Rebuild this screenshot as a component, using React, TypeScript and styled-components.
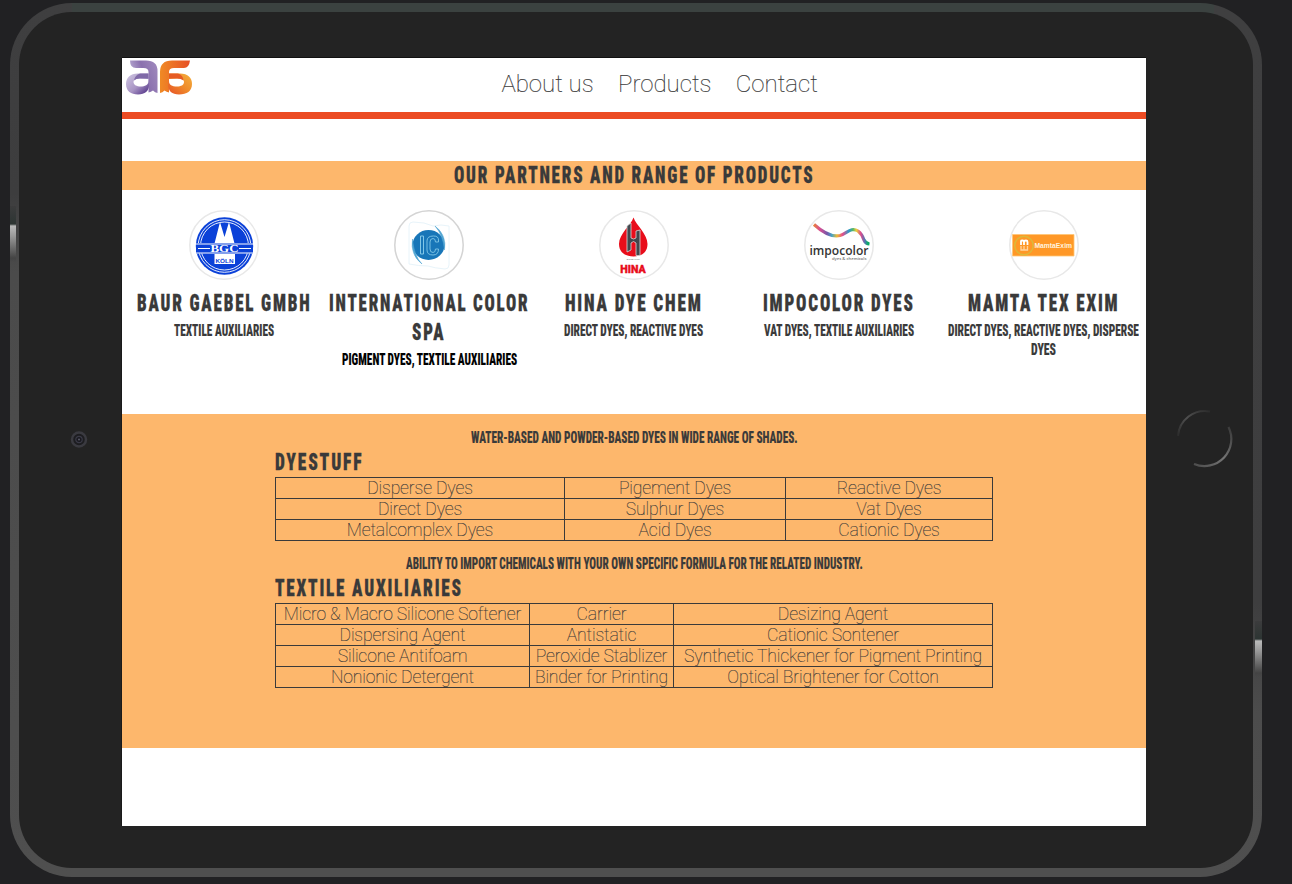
import React, { useLayoutEffect, useRef, useState } from 'react';
import styled, { createGlobalStyle } from 'styled-components';

const ink = '#3a3a3a';
const apricot = '#fdb76c';

const GlobalStyle = createGlobalStyle`
  * { box-sizing: border-box; }
  body { margin: 0; background: #212123; font-family: Roboto, sans-serif; color: ${ink}; overflow: hidden; }
  h1, h2, h3, p { margin: 0; font-weight: inherit; font-size: inherit; }
`;

const Desk = styled.div`
  width: 1292px;
  height: 884px;
  padding: 3px 0 0 10px;
  background: #212123;
`;

const Tablet = styled.div`
  position: relative;
  width: 1252px;
  height: 874px;
  padding: 55px 116px 51px 112px;
  border-radius: 62px;
  background:
    linear-gradient(#3f3f40 0, #3d3d3e 190px, #4b4b4b 270px, #4f4f4f 100%) 0 0 / 62px 100% no-repeat,
    linear-gradient(#3f3f40 0, #3e3e3f 600px, #4c4c4c 710px, #4f4f4f 100%) 100% 0 / 48px 100% no-repeat,
    linear-gradient(#3b4240 0, #3b4240 50%, #4f4f4f 50%, #4f4f4f 100%);
  &::before {
    content: '';
    position: absolute;
    inset: 9px;
    border-radius: 53px;
    background: #232323;
  }
`;

const Glint = styled.i<{ $side: 'left' | 'right'; $top: number }>`
  position: absolute;
  ${(p) => p.$side}: 0;
  top: ${(p) => p.$top}px;
  width: ${(p) => (p.$side === 'left' ? 6 : 7)}px;
  height: 56px;
  background: linear-gradient(#3c3c3d 0, #2d3533 18px, #bababa 20px, #999 30px, #444 52px, transparent);
`;

const Camera = styled.svg`
  position: absolute;
  left: 60px;
  top: 427px;
`;

const HomeButton = styled.svg`
  position: absolute;
  left: 1164px;
  top: 404px;
`;

const Screen = styled.main`
  position: relative;
  width: 1024px;
  height: 768px;
  background: #fff;
  box-shadow: 0 -1px 0 #111, -1px 0 0 #1a1a1a;
`;

const Header = styled.header`
  display: flex;
  height: 61px;
  border-bottom: 7px solid #ec4b23;
  padding: 0 0 0 2px;
`;

const Nav = styled.nav`
  display: flex;
  gap: 24.4px;
  padding: 11px 0 0 307.4px;
  font-size: 24px;
  line-height: 30px;
  font-weight: 100;
  -webkit-text-stroke: 0.2px ${ink};
`;

const NavItem = styled.a`
  white-space: nowrap;
`;

const TitleBand = styled.h1`
  display: flex;
  justify-content: center;
  height: 29px;
  margin-top: 42px;
  background: ${apricot};
`;

const Partners = styled.section`
  display: grid;
  grid-template-columns: repeat(5, 1fr);
  height: 224px;
  padding-top: 20px;
`;

const Partner = styled.article`
  display: flex;
  flex-direction: column;
  align-items: center;
  svg { display: block; margin-bottom: 9px; }
`;

const Lines = styled.div<{ $dark?: boolean }>`
  display: flex;
  flex-direction: column;
  align-items: center;
  color: ${(p) => (p.$dark ? '#000' : ink)};
  & + & { margin-top: 3px; }
`;

const FitBox = styled.span<{ $width: number; $large?: boolean }>`
  display: block;
  width: ${(p) => p.$width}px;
  height: ${(p) => (p.$large ? 29 : 19)}px;
  line-height: ${(p) => (p.$large ? 28 : 19)}px;
  font-size: ${(p) => (p.$large ? 24.8 : 16.5)}px;
  letter-spacing: ${(p) => (p.$large ? 2.6 : 0)}px;
  font-weight: ${(p) => (p.$large ? 900 : 800)};
  font-stretch: 75%;
  -webkit-text-stroke: ${(p) => (p.$large ? 0.3 : 0.15)}px currentColor;
  white-space: nowrap;
`;

const FitGlyphs = styled.span`
  display: inline-block;
  transform-origin: 0 50%;
`;

function Condensed({ text, width, large }: { text: string; width: number; large?: boolean }) {
  const ref = useRef<HTMLSpanElement>(null);
  const [scale, setScale] = useState(0.6);
  useLayoutEffect(() => {
    const el = ref.current;
    if (el) setScale((width - (large ? 2.2 : 0)) / (el.offsetWidth - (large ? 2.6 : 0)));
  }, [text, width, large]);
  return (
    <FitBox $width={width} $large={large}>
      <FitGlyphs ref={ref} style={{ transform: `scaleX(${scale})` }}>{text}</FitGlyphs>
    </FitBox>
  );
}

const Range = styled.section`
  display: flex;
  flex-direction: column;
  align-items: center;
  height: 334px;
  padding-top: 14px;
  background: ${apricot};
`;

const Group = styled.div`
  display: flex;
  flex-direction: column;
  align-items: center;
  width: 718px;
  height: 126px;
`;

const GroupTitle = styled.h2`
  align-self: flex-start;
  height: 30px;
  padding: 1px 0 0;
`;

const Table = styled.table`
  align-self: flex-start;
  width: 717px;
  table-layout: fixed;
  border-collapse: collapse;
  font-size: 17.6px;
  letter-spacing: -0.15px;
  font-weight: 100;
  -webkit-text-stroke: 0.15px ${ink};
  line-height: 20px;
  text-align: center;
`;

const Cell = styled.td`
  height: 21px;
  padding: 0;
  border: 1px solid ${ink};
  white-space: nowrap;
`;

function ProductTable({ columns, rows }: { columns: number[]; rows: string[][] }) {
  return (
    <Table>
      <colgroup>{columns.map((w, i) => <col key={i} width={w} />)}</colgroup>
      <tbody>
        {rows.map((row) => (
          <tr key={row[0]}>{row.map((c) => <Cell key={c}>{c}</Cell>)}</tr>
        ))}
      </tbody>
    </Table>
  );
}

const BrandLogo = () => (
  <svg width="70" height="40" viewBox="124 58 70 40">
    <defs>
      <linearGradient id="lilac" x1="0" y1="0.7" x2="1" y2="0.3"><stop offset="0" stopColor="#c5bbdc" /><stop offset=".55" stopColor="#8a70ae" /><stop offset="1" stopColor="#9d86bb" /></linearGradient>
      <linearGradient id="plum" x1="0" y1="0" x2="1" y2="1"><stop offset="0" stopColor="#d0c8e3" /><stop offset=".55" stopColor="#a894c4" /><stop offset="1" stopColor="#45247e" /></linearGradient>
      <linearGradient id="flame" x1="0" y1="0" x2="1" y2="0"><stop offset="0" stopColor="#f08a25" /><stop offset="1" stopColor="#e64f26" /></linearGradient>
      <linearGradient id="amber" x1="0" y1="1" x2="1" y2="0"><stop offset="0" stopColor="#e64f26" /><stop offset=".5" stopColor="#ef8a2b" /><stop offset="1" stopColor="#f4b13e" /></linearGradient>
    </defs>
    <path fill="url(#lilac)" d="M130 60.500H146Q157.500 60.500 157.500 71V93Q155 92.500 153 90.500Q151 92 148.500 92.500V72Q148.500 68 143.500 68H136Q130 68 130 60.500Z" />
    <path fill="url(#plum)" fillRule="evenodd" d="M148.500 73.500H138C130 73.500 126 78 126 84C126 91 131 94.500 138 94.500C145 94.500 149 91 149 85ZM148.500 79V81C148.500 85 145 86.500 140.500 86.500C137 86.500 133.500 85 133.500 82C133.500 79 137 78.500 140 78.500Z" />
    <path fill="#806aa8" d="M148.500 73.500H140Q135 75 134 80.500Q136 78.500 140 78.500H148.500Z" />
    <path fill="url(#flame)" d="M190 60.500H172Q160 60.500 160 72V93Q162.500 92.500 164.500 90.500Q166.500 92 169 92.500V72Q169 68 174 68H184Q189 68 190 60.500Z" />
    <path fill="url(#amber)" fillRule="evenodd" d="M169 73.500H180C188 73.500 192 78 192 84C192 91 187 94.500 179 94.500C172 94.500 168 91 168 84ZM169 79V81C169 85 172 86.500 177 86.500C181 86.500 184 85 184 82C184 79 181 78.500 177 78.500Z" />
    <path fill="#e65b24" d="M169 73.500H178Q183 75 183.500 80.500Q181 78.500 177 78.500H169Z" />
  </svg>
);

const Medallion = ({ ring = '#e8e8e8', children }: { ring?: string; children: React.ReactNode }) => (
  <svg width="70" height="70" viewBox="0 0 70 70">
    <circle cx="35" cy="35" r="34.200" fill="#fff" stroke={ring} strokeWidth="1.500" />
    {children}
  </svg>
);

const BgcLogo = () => (
  <Medallion>
    <circle cx="35.500" cy="36" r="28.700" fill="#0b41d8" />
    <circle cx="35.500" cy="36" r="26.300" fill="none" stroke="#fff" strokeWidth=".9" />
    <circle cx="35.500" cy="36" r="24" fill="none" stroke="#fff" strokeWidth=".9" />
    <path d="M25.500 33.500L31 12L35.500 27L40 12L45.500 33.500ZM25.500 44H46V54H25.500Z" fill="#fff" />
    <path d="M7 33H64V43.500H7Z" fill="#0b41d8" />
    <path d="M7 34H64M7 43H64M9 38.500H21M50 38.500H62" stroke="#fff" strokeWidth="1" />
    <text x="35.500" y="42.200" textAnchor="middle" textLength="28" lengthAdjust="spacingAndGlyphs" fontFamily="Liberation Serif, serif" fontWeight="700" fontSize="10.500" fill="#fff">BGC</text>
    <text x="35.500" y="53" textAnchor="middle" textLength="18" lengthAdjust="spacingAndGlyphs" fontFamily="Liberation Sans, sans-serif" fontWeight="700" fontSize="4.500" fill="#0b41d8">KÖLN</text>
  </Medallion>
);

const IcLogo = () => (
  <Medallion ring="#d4d4d4">
    <path d="M15 54V16Q15 12 19 12Q31 12 39 16Q47 14 55 16V55Q55 59 51 59Q40 58 34 56Q25 56 15 54Z" fill="none" stroke="#e8f4fa" strokeWidth="1" />
    <ellipse cx="34.500" cy="35" rx="16" ry="15" fill="#1876b8" />
    <path d="M41 16Q53 25 50.500 40Q49 25 41 16ZM28 54Q16 45 18.500 29Q20 46 28 54Z" fill="#50a5d2" stroke="#50a5d2" strokeWidth=".5" />
    <path d="M26.500 26H29.500V44H26.500Z" fill="none" stroke="#82c7e7" strokeWidth="1" />
    <path d="M44.500 32V30Q44.500 26 39.500 26Q33 26 33 31V40Q33 45 39 45Q44.500 45 44.500 39H41.500Q41.500 42.500 39 42.500Q36 42.500 36 39V32Q36 28.500 39 28.500Q41.500 28.500 41.500 32Z" fill="none" stroke="#82c7e7" strokeWidth=".9" />
  </Medallion>
);

const HinaLogo = () => (
  <Medallion>
    <path d="M34.500 7.500C32 15 20 24 20 34C20 42 26 46.500 34.500 46.500C43 46.500 48.500 42 48.500 34C48.500 24 37 15 34.500 7.500Z" fill="#e80d1b" />
    <path d="M28 16L32 13V28Q34.500 30 37 28V21L41 20V45.500H37V33Q34.500 30 32 33V40L28 42Z" fill="#41474d" stroke="#d8d8d8" strokeWidth=".8" />
    <text x="34" y="49.600" textAnchor="middle" textLength="13" fontFamily="Liberation Sans, sans-serif" fontSize="2.400" fill="#777">SINCE 1985</text>
    <text x="34" y="62.800" textAnchor="middle" textLength="25.500" lengthAdjust="spacingAndGlyphs" fontFamily="Roboto, sans-serif" fontWeight="900" fontSize="11.600" fill="#e80d1b" stroke="#e80d1b" strokeWidth=".4">HINA</text>
  </Medallion>
);

const ImpocolorLogo = () => (
  <Medallion>
    <defs>
      <linearGradient id="ribbon" gradientUnits="userSpaceOnUse" x1="9" y1="0" x2="66" y2="0">
        <stop offset="0" stopColor="#e9862e" /><stop offset=".12" stopColor="#d94d92" /><stop offset=".25" stopColor="#7359aa" /><stop offset=".33" stopColor="#45a5c5" /><stop offset=".42" stopColor="#edba32" /><stop offset=".52" stopColor="#e34d8d" /><stop offset=".63" stopColor="#2b9ac8" /><stop offset=".7" stopColor="#52b56b" /><stop offset=".76" stopColor="#efce38" /><stop offset=".84" stopColor="#da4a91" /><stop offset=".91" stopColor="#5276b4" /><stop offset=".96" stopColor="#08aa66" />
      </linearGradient>
    </defs>
    <path d="M10 14.500Q25 28 36 25.500C43 23.500 47 16.500 54 21Q58 24 60 30Q61.500 33.500 65.500 34" fill="none" stroke="url(#ribbon)" strokeWidth="3.200" />
    <text fontFamily="Open Sans, sans-serif" fontWeight="600" fill="#343434">
      <tspan x="5.500" y="45" textLength="59" lengthAdjust="spacingAndGlyphs" fontSize="13">impocolor</tspan>
      <tspan x="28" y="49.800" textLength="34.500" lengthAdjust="spacingAndGlyphs" fontSize="4.200" fill="#777">dyes &amp; chemicals</tspan>
    </text>
  </Medallion>
);

const MamtaLogo = () => (
  <Medallion>
    <path d="M3.500 24.500H65V46H3.500Z" fill="#ff9827" stroke="#ffc575" strokeWidth=".8" />
    <circle cx="15" cy="35.500" r="9.300" fill="none" stroke="#dcb83a" strokeWidth="1.500" />
    <path d="M12 35V31Q12 30.500 13.500 30.500Q15 30.500 15 32V35M15 32Q15 30.500 17 30.500Q18.500 30.500 18.500 32V35" fill="none" stroke="#fff" strokeWidth="1.800" />
    <path d="M12 36V40H18.500V36M15 36V40" fill="none" stroke="#ffd39f" strokeWidth="1.300" />
    <text x="25.500" y="37.500" textLength="37.500" lengthAdjust="spacingAndGlyphs" fontFamily="Liberation Sans, sans-serif" fontWeight="700" fontSize="6.500" fill="#fff3df">MamtaExim</text>
  </Medallion>
);

type Line = [string, number];
const partners: { logo: React.ReactNode; name: Line[]; goods: Line[]; dark?: boolean }[] = [
  { logo: <BgcLogo />, name: [['BAUR GAEBEL GMBH', 175]], goods: [['TEXTILE AUXILIARIES', 100]] },
  { logo: <IcLogo />, name: [['INTERNATIONAL COLOR', 201], ['SPA', 34]], goods: [['PIGMENT DYES, TEXTILE AUXILIARIES', 175]], dark: true },
  { logo: <HinaLogo />, name: [['HINA DYE CHEM', 138]], goods: [['DIRECT DYES, REACTIVE DYES', 139]] },
  { logo: <ImpocolorLogo />, name: [['IMPOCOLOR DYES', 152]], goods: [['VAT DYES, TEXTILE AUXILIARIES', 150]] },
  { logo: <MamtaLogo />, name: [['MAMTA TEX EXIM', 152]], goods: [['DIRECT DYES, REACTIVE DYES, DISPERSE', 191], ['DYES', 25]] },
];

export default function App() {
  return (
    <Desk>
      <GlobalStyle />
      <Tablet>
        <Glint $side="left" $top={203} />
        <Glint $side="right" $top={618} />
        <Camera width="18" height="18" viewBox="0 0 18 18">
          <circle cx="9" cy="9.500" r="7" fill="#1d1d20" stroke="#3a3a40" strokeWidth="2.500" />
          <circle cx="9" cy="9.500" r="3.200" fill="#19191f" stroke="#3a3a46" strokeWidth="1.200" />
          <circle cx="9" cy="9.500" r="1" fill="#5a5a68" />
        </Camera>
        <HomeButton width="60" height="62" viewBox="0 0 60 62">
          <defs>
            <linearGradient id="rimDark" x1="0" y1="1" x2="1" y2="0"><stop offset="0" stopColor="#2b2b2b" /><stop offset=".5" stopColor="#505050" /><stop offset="1" stopColor="#2b2b2b" /></linearGradient>
            <linearGradient id="rimLight" x1="1" y1="0" x2="0" y2="1"><stop offset="0" stopColor="#383838" /><stop offset=".5" stopColor="#757575" /><stop offset="1" stopColor="#4c4c4c" /></linearGradient>
          </defs>
          <path d="M4 29A27 27 0 0 1 36 4.500" fill="none" stroke="url(#rimDark)" strokeWidth="2" />
          <path d="M54.500 20A27 27 0 0 1 20 57" fill="none" stroke="url(#rimLight)" strokeWidth="2.200" />
        </HomeButton>
        <Screen>
          <Header>
            <BrandLogo />
            <Nav>
              <NavItem>About us</NavItem>
              <NavItem>Products</NavItem>
              <NavItem>Contact</NavItem>
            </Nav>
          </Header>
          <TitleBand><Condensed text="OUR PARTNERS AND RANGE OF PRODUCTS" width={361} large /></TitleBand>
          <Partners>
            {partners.map((p) => (
              <Partner key={p.name[0][0]}>
                {p.logo}
                <Lines>{p.name.map(([t, w]) => <Condensed key={t} text={t} width={w} large />)}</Lines>
                <Lines $dark={p.dark}>{p.goods.map(([t, w]) => <Condensed key={t} text={t} width={w} />)}</Lines>
              </Partner>
            ))}
          </Partners>
          <Range>
            <Group>
              <Condensed text="WATER-BASED AND POWDER-BASED DYES IN WIDE RANGE OF SHADES." width={327} />
              <GroupTitle><Condensed text="DYESTUFF" width={88.500} large /></GroupTitle>
              <ProductTable
                columns={[289, 221, 207]}
                rows={[
                  ['Disperse Dyes', 'Pigement Dyes', 'Reactive Dyes'],
                  ['Direct Dyes', 'Sulphur Dyes', 'Vat Dyes'],
                  ['Metalcomplex Dyes', 'Acid Dyes', 'Cationic Dyes'],
                ]}
              />
            </Group>
            <Group>
              <Condensed text="ABILITY TO IMPORT CHEMICALS WITH YOUR OWN SPECIFIC FORMULA FOR THE RELATED INDUSTRY." width={457} />
              <GroupTitle><Condensed text="TEXTILE AUXILIARIES" width={188.500} large /></GroupTitle>
              <ProductTable
                columns={[254, 144, 319]}
                rows={[
                  ['Micro & Macro Silicone Softener', 'Carrier', 'Desizing Agent'],
                  ['Dispersing Agent', 'Antistatic', 'Cationic Sontener'],
                  ['Silicone Antifoam', 'Peroxide Stablizer', 'Synthetic Thickener for Pigment Printing'],
                  ['Nonionic Detergent', 'Binder for Printing', 'Optical Brightener for Cotton'],
                ]}
              />
            </Group>
          </Range>
        </Screen>
      </Tablet>
    </Desk>
  );
}
